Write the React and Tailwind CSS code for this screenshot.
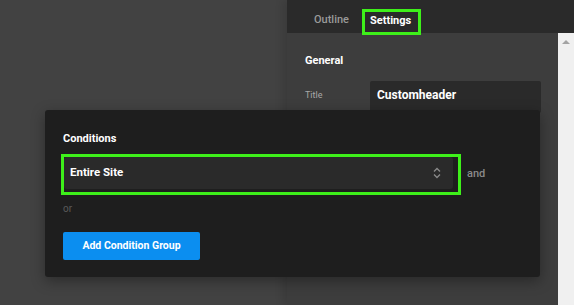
export default function App() {
  const font = { fontFamily: "Roboto, 'Liberation Sans', sans-serif" };
  return (
    <div className="relative w-[574px] h-[305px] overflow-hidden bg-[#424242] flex" style={font}>
      <div className="flex-1" />
      <div className="w-[287px] h-full flex flex-col shadow-[-4px_0_8px_rgba(0,0,0,0.12)]">
        <div className="h-[33px] bg-[#2a2a2a] flex items-start pl-[27px] shrink-0">
          <span className="mt-[13px] text-[11px] leading-[14px] font-medium text-[#9a9a9a]">Outline</span>
          <div className="ml-[13px] mt-[9px] h-[26px] w-[59px] border-[3px] border-[#3ef01a] flex items-start pl-[5px] bg-[#2a2a2a] relative z-10">
            <span className="mt-[2px] text-[11px] leading-[14px] font-bold text-white">Settings</span>
          </div>
        </div>
        <div className="flex-1 flex">
          <div className="flex-1 bg-[#3d3d3d] pl-[18px] pr-[17px] pt-[21px]">
            <div className="text-[11px] leading-[14px] font-bold text-white">General</div>
            <div className="mt-[13px] flex items-start">
              <span className="mt-[8px] text-[9px] leading-[12px] text-[#a8a8a8] w-[65px]">Title</span>
              <div className="flex-1 h-[32px] bg-[#2a2a2a] rounded-[2px] pl-[7px] pt-[7px] text-[12px] leading-[14px] font-bold text-white">
                Customheader
              </div>
            </div>
          </div>
          <div className="w-[16px] bg-[#f0f0f0] flex justify-center pt-[7px]">
            <div className="w-0 h-0 border-l-[4px] border-r-[4px] border-b-[4px] border-l-transparent border-r-transparent border-b-[#a3a3a3]" />
          </div>
        </div>
      </div>

      <div className="absolute left-[45px] top-[110px] w-[495px] h-[167px] bg-[#1e1e1e] rounded-[3px] shadow-[0_4px_14px_rgba(0,0,0,0.35)] pl-[18px] pt-[22px]">
        <div className="text-[11px] leading-[14px] font-bold text-white">Conditions</div>
        <div className="mt-[8px] flex items-center">
          <div className="w-[400px] h-[41px] ml-[-2px] border-[3px] border-[#3ef01a] pr-[5px]">
            <div className="h-[32px] bg-[#2a2a2a] rounded-[3px] flex items-center justify-between pl-[6px] pr-[12px]">
              <span className="text-[11.5px] font-bold text-white">Entire Site</span>
              <svg width="8" height="12" viewBox="0 0 8 12" fill="none" stroke="#8a8a8a" strokeWidth="1.3">
                <path d="M1 4.5 L4 1.5 L7 4.5" />
                <path d="M1 7.5 L4 10.5 L7 7.5" />
              </svg>
            </div>
          </div>
          <span className="ml-[6px] text-[11px] font-medium text-[#8a8a8a]">and</span>
        </div>
        <div className="mt-[7px] text-[10px] leading-[14px] text-[#5a5a5a]">or</div>
        <button className="mt-[16px] w-[137px] h-[28px] bg-[#0b8ef0] rounded-[2px] text-[10.5px] font-bold text-white flex items-center justify-center">
          Add Condition Group
        </button>
      </div>
    </div>
  );
}
